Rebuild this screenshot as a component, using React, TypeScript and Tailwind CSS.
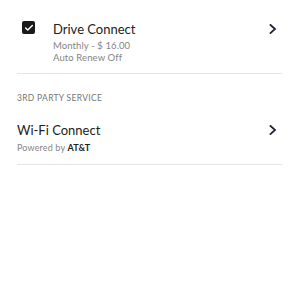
import { Check } from "lucide-react";

function Chevron() {
  return (
    <svg width="8" height="10" viewBox="0 0 8 10" fill="none" className="shrink-0">
      <path d="M1.5 1L6 5L1.5 9" stroke="#1f2430" strokeWidth="1.8" strokeLinecap="square" />
    </svg>
  );
}

export default function App() {
  return (
    <div className="w-[300px] h-[300px] bg-white font-['Lato',sans-serif] text-[#222]">
      <div className="pl-[17px] pr-[18px] pt-[21px]">
        <div className="flex items-start">
          <div className="w-[13px] h-[13px] ml-[5px] rounded-[2px] bg-[#1a1a1a] flex items-center justify-center">
            <Check size={10} strokeWidth={3.5} color="white" />
          </div>
          <div className="ml-[18px] flex-1">
            <div className="text-[13px] leading-[16px]">Drive Connect</div>
            <div className="mt-[3px] text-[9.5px] leading-[12px] text-[#858585] tracking-[0.1px]">
              Monthly - $ 16.00
            </div>
            <div className="text-[9.5px] leading-[11.5px] text-[#858585] tracking-[0.1px]">Auto Renew Off</div>
          </div>
          <div className="mt-[3px] mr-[5px]">
            <Chevron />
          </div>
        </div>
        <div className="mt-[9px] h-px bg-[#e6e6e6]" />

        <div className="mt-[19px] text-[8.5px] leading-[10px] text-[#777] tracking-[0.3px]">
          3RD PARTY SERVICE
        </div>

        <div className="mt-[19px] flex items-start">
          <div className="flex-1">
            <div className="text-[13px] leading-[16px]">Wi-Fi Connect</div>
            <div className="mt-[4px] text-[9px] leading-[11px] text-[#858585] tracking-[0.15px]">
              Powered by <span className="font-bold text-[#222]">AT&amp;T</span>
            </div>
          </div>
          <div className="mt-[3px] mr-[5px]">
            <Chevron />
          </div>
        </div>
        <div className="mt-[11px] h-px bg-[#e6e6e6]" />
      </div>
    </div>
  );
}
